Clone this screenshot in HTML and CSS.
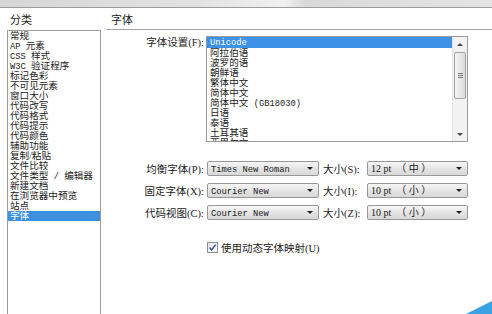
FILE: index.html
```html
<!DOCTYPE html>
<html>
<head>
<meta charset="utf-8">
<title>首选参数 - 字体</title>
<link rel="stylesheet" href="styles.css">
</head>
<body>

<div class="titlebar"></div>

<div class="dialog">
  <!-- category column -->
  <div class="cat">
    <div class="cat-title">分类</div>
    <ul class="cat-list">
      <li>常规</li>
      <li><span class="en">AP </span>元素</li>
      <li><span class="en">CSS </span>样式</li>
      <li><span class="en">W3C </span>验证程序</li>
      <li>标记色彩</li>
      <li>不可见元素</li>
      <li>窗口大小</li>
      <li>代码改写</li>
      <li>代码格式</li>
      <li>代码提示</li>
      <li>代码颜色</li>
      <li>辅助功能</li>
      <li>复制/粘贴</li>
      <li>文件比较</li>
      <li>文件类型<span class="en"> / </span>编辑器</li>
      <li>新建文档</li>
      <li>在浏览器中预览</li>
      <li>站点</li>
      <li class="sel">字体</li>
    </ul>
  </div>

  <!-- font page -->
  <div class="panel">
    <div class="panel-title">字体</div>

    <div class="row-set">
      <span class="lbl">字体设置(F):</span>
      <div class="listbox">
        <ul class="opts">
          <li class="sel"><span class="en">Unicode</span></li>
          <li>阿拉伯语</li>
          <li>波罗的语</li>
          <li>朝鲜语</li>
          <li>繁体中文</li>
          <li>简体中文</li>
          <li>简体中文<span class="en"> (GB18030)</span></li>
          <li>日语</li>
          <li>泰语</li>
          <li>土耳其语</li>
          <li>西里尔文</li>
        </ul>
        <div class="scroll">
          <div class="sb-btn"><i class="up"></i></div>
          <div class="sb-track">
            <div class="thumb"><b></b><b></b><b></b></div>
          </div>
          <div class="sb-btn"><i class="down"></i></div>
        </div>
      </div>
    </div>

    <div class="row">
      <span class="lbl">均衡字体(P):</span>
      <div class="combo wide"><span class="en">Times New Roman</span><i class="arrow"></i></div>
      <span class="lbl2">大小(S):</span>
      <div class="combo size">12 pt&nbsp; （ 中 ）<i class="arrow"></i></div>
    </div>
    <div class="row">
      <span class="lbl">固定字体(X):</span>
      <div class="combo wide"><span class="en">Courier New</span><i class="arrow"></i></div>
      <span class="lbl2">大小(I):</span>
      <div class="combo size">10 pt&nbsp; （ 小 ）<i class="arrow"></i></div>
    </div>
    <div class="row">
      <span class="lbl">代码视图(C):</span>
      <div class="combo wide"><span class="en">Courier New</span><i class="arrow"></i></div>
      <span class="lbl2">大小(Z):</span>
      <div class="combo size">10 pt&nbsp; （ 小 ）<i class="arrow"></i></div>
    </div>

    <div class="check">
      <svg class="box" width="11" height="11" viewBox="0 0 11 11">
        <defs>
          <linearGradient id="cb" x1="0" y1="0" x2="1" y2="1">
            <stop offset="0" stop-color="#e4e6ea"/>
            <stop offset="1" stop-color="#fbfbfb"/>
          </linearGradient>
        </defs>
        <rect x="0.5" y="0.5" width="10" height="10" fill="url(#cb)" stroke="#8e9297"/>
        <path d="M2.6 5.6 L4.6 8 L8.6 2.6" fill="none" stroke="#3d5a99" stroke-width="1.5"/>
      </svg>
      <span>使用动态字体映射(U)</span>
    </div>
  </div>
</div>

<div class="corner"></div>

</body>
</html>
```

FILE: styles.css
```css
BODY {
    margin : 0;
    background : #fff;
    color : #1b1b1b;
    font-family : "Liberation Serif", "Noto Sans CJK SC", serif;
    font-size : 10.5px;
    overflow : hidden;
}
UL {
    list-style : none;
    margin : 0;
    padding : 0;
}
.en {
    font-family : "Liberation Mono", monospace;
    font-size : 8.75px;
}

/* top strip left of the window frame */
.titlebar {
    height : 7px;
    background : linear-gradient(90deg, #d6d6d6 0%, #e2e2e2 40%, #f0f0f0 58%, #d9d9d9 62%, #e4e4e4 100%);
    border-bottom : 1px solid #9c9c9c;
}

.dialog {
    display : flex;
    padding-left : 7px;
}

/* category column */
.cat {
    width : 94px;
    flex : none;
}
.cat-title {
    height : 22px;
    padding : 6px 0 0 3px;
    box-sizing : border-box;
    line-height : 12px;
    font-size : 11px;
}
.cat-list {
    height : 284px;
    border : 1px solid #9a9a9a;
    border-bottom : none;
    line-height : 10px;
    font-size : 9.6px;
}
.cat-list LI {
    height : 10px;
    padding-left : 2px;
    white-space : nowrap;
}
.cat-list LI.sel {
    background : #3d8fe2;
    color : #fff;
}

/* font page */
.panel {
    flex : 1;
    margin-left : 5px;
}
.panel-title {
    height : 22px;
    padding : 6px 0 0 5px;
    box-sizing : border-box;
    border-bottom : 1px solid #a6a6a6;
    line-height : 12px;
    font-size : 11px;
}
.lbl {
    width : 98px;
    flex : none;
    text-align : right;
    white-space : nowrap;
}
.lbl2 {
    width : 40px;
    flex : none;
    margin : 0 4px;
    white-space : nowrap;
}

.row-set {
    display : flex;
    margin-top : 6px;
}
.row-set .lbl {
    padding-top : 1px;
    line-height : 12px;
}
.listbox {
    display : flex;
    width : 262px;
    height : 106px;
    margin-left : 2px;
    box-sizing : border-box;
    border : 1px solid #9c9c9c;
    overflow : hidden;
}
.opts {
    flex : 1;
    line-height : 10px;
    font-size : 9.6px;
}
.opts LI {
    height : 10px;
    padding-left : 3px;
    white-space : nowrap;
}
.opts LI.sel {
    height : 11px;
    background : #3d91e6;
    color : #fff;
}

/* scroll bar of the encoding list */
.scroll {
    width : 14px;
    display : flex;
    flex-direction : column;
    background : #f2f2f2;
    border-left : 1px solid #e4e4e4;
}
.sb-btn {
    height : 14px;
    display : flex;
    align-items : center;
    justify-content : center;
}
.sb-btn I {
    width : 0;
    height : 0;
    border-left : 3px solid transparent;
    border-right : 3px solid transparent;
}
.sb-btn .up {
    border-bottom : 3px solid #4a4a4a;
}
.sb-btn .down {
    border-top : 3px solid #4a4a4a;
}
.sb-track {
    flex : 1;
    padding-top : 1px;
}
.thumb {
    height : 45px;
    margin : 0 1px;
    border : 1px solid #a3a3a3;
    border-radius : 2px;
    background : linear-gradient(90deg, #f4f4f4, #dcdcdc);
    display : flex;
    flex-direction : column;
    align-items : center;
    justify-content : center;
    gap : 1px;
}
.thumb B {
    width : 5px;
    height : 1px;
    background : #7a7a7a;
}

/* combo rows */
.row {
    display : flex;
    align-items : center;
    height : 15px;
}
.row-set + .row {
    margin-top : 19px;
}
.row + .row {
    margin-top : 7px;
}
.combo {
    position : relative;
    height : 15px;
    margin-left : 3px;
    padding-left : 3px;
    box-sizing : border-box;
    border : 1px solid #979797;
    border-radius : 2px;
    background : linear-gradient(#f6f6f6, #e3e3e3 55%, #d8d8d8);
    line-height : 13px;
    white-space : nowrap;
}
.combo.wide {
    width : 112px;
}
.combo.size {
    width : 101px;
    margin-left : 0;
    font-size : 10px;
}
.arrow {
    position : absolute;
    right : 5px;
    top : 5px;
    border-left : 3px solid transparent;
    border-right : 3px solid transparent;
    border-top : 3px solid #222;
}

/* check box */
.check {
    display : flex;
    align-items : center;
    gap : 3px;
    margin : 20px 0 0 101px;
    font-size : 10.5px;
}
.check .box {
    flex : none;
}

/* blue corner of the photo */
.corner {
    position : fixed;
    right : 0;
    bottom : 0;
    width : 26px;
    height : 13px;
    background : #3aa2e2;
    clip-path : polygon(100% 0, 100% 100%, 0 100%);
}
```
